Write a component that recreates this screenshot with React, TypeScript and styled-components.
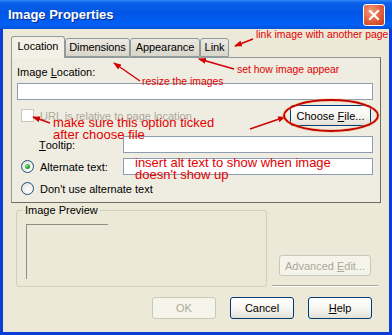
import styled, { createGlobalStyle } from 'styled-components';

const GlobalStyle = createGlobalStyle`
  html, body { margin: 0; padding: 0; background: #ffffff; }
  body { font-family: "Liberation Sans", Arial, sans-serif; }
  * { box-sizing: border-box; }
`;

const Window = styled.div`
  position: relative;
  width: 392px;
  height: 335px;
  display: flex;
  flex-direction: column;
  overflow: hidden;
  font-size: 11px;
  color: #000;
`;

const TitleBar = styled.div`
  height: 29px;
  flex: none;
  display: flex;
  align-items: center;
  justify-content: space-between;
  padding: 0 8px 0 8px;
  background: linear-gradient(
    to bottom,
    #2f86f6 0%,
    #0a5fe6 10%,
    #0055e5 45%,
    #0060f5 85%,
    #0052d8 100%
  );
`;

const Title = styled.span`
  color: #ffffff;
  font-weight: bold;
  font-size: 13px;
  text-shadow: 1px 1px 0 #0a2f8f;
`;

const CloseButton = styled.div`
  width: 22px;
  height: 22px;
  margin-right: -1px;
  margin-top: 1px;
  border: 1px solid #ffffff;
  border-radius: 3px;
  background: radial-gradient(circle at 35% 30%, #f29a7c 0%, #e2623f 50%, #c23c1a 100%);
  display: flex;
  align-items: center;
  justify-content: center;
`;

const Frame = styled.div`
  flex: 1;
  display: flex;
  flex-direction: column;
  background: #ece9d8;
  border: 3px solid #0b3ed6;
  border-top: none;
  padding: 7px 8px 0 8px;
`;

const TabStrip = styled.div`
  display: flex;
  align-items: flex-end;
  height: 21px;
  position: relative;
  z-index: 1;
`;

const Tab = styled.div<{ $active?: boolean; $w: number }>`
  width: ${(p) => p.$w}px;
  height: ${(p) => (p.$active ? '22px' : '19px')};
  margin-bottom: ${(p) => (p.$active ? '-1px' : '0')};
  padding-top: ${(p) => (p.$active ? '3px' : '2px')};
  border: 1px solid #919b9c;
  border-bottom: ${(p) => (p.$active ? 'none' : '1px solid #919b9c')};
  border-radius: 3px 3px 0 0;
  background: ${(p) =>
    p.$active ? '#f3f1e7' : 'linear-gradient(to bottom, #ebe9e1, #d8d5ca)'};
  font-size: 11px;
  line-height: 13px;
  text-align: center;
  white-space: nowrap;
  letter-spacing: -0.1px;
`;

const Panel = styled.div`
  height: 146px;
  flex: none;
  border: 1px solid #919b9c;
  border-right-color: #6f6d64;
  border-bottom-color: #6f6d64;
  background: #efede2;
  padding: 8px 7px 0 5px;
  display: flex;
  flex-direction: column;
`;

const Label = styled.div`
  line-height: 13px;
  height: 13px;
  white-space: nowrap;
`;

const TextInput = styled.div`
  height: 17px;
  border: 1px solid #8e9daf;
  background: #ffffff;
`;

const LocationInput = styled(TextInput)`
  margin-top: 4px;
`;

const CheckRow = styled.div`
  display: flex;
  align-items: center;
  height: 21px;
  margin-top: 5px;
`;

const CheckBox = styled.span`
  width: 13px;
  height: 13px;
  margin-left: 4px;
  border: 1px solid #cac8bb;
  background: #ffffff;
  flex: none;
`;

const DisabledText = styled.span`
  margin-left: 6px;
  color: #aca899;
  white-space: nowrap;
`;

const Button = styled.div<{ $disabled?: boolean; $width?: number }>`
  width: ${(p) => p.$width ?? 64}px;
  height: 22px;
  flex: none;
  display: flex;
  align-items: center;
  justify-content: center;
  border: 1px solid ${(p) => (p.$disabled ? '#c9c7ba' : '#003c74')};
  border-radius: 3px;
  color: ${(p) => (p.$disabled ? '#aca899' : '#000000')};
  background: ${(p) =>
    p.$disabled
      ? '#f5f4ea'
      : 'linear-gradient(to bottom, #ffffff 0%, #f6f5f0 55%, #e3e0d6 100%)'};
  white-space: nowrap;
  font-size: 11px;
`;

const ChooseButton = styled(Button)`
  height: 21px;
  margin-left: auto;
  margin-right: 2px;
`;

const FieldRow = styled.div<{ $gap: number }>`
  display: grid;
  grid-template-columns: 106px 1fr;
  align-items: center;
  height: ${(p) => (p.$gap === 7 ? 13 : 17)}px;
  margin-top: ${(p) => p.$gap}px;
`;

const FieldLabel = styled.div<{ $indent?: boolean }>`
  display: flex;
  align-items: center;
  padding-left: ${(p) => (p.$indent ? '22px' : '4px')};
  white-space: nowrap;
`;

const Radio = styled.span<{ $checked?: boolean }>`
  position: relative;
  width: 13px;
  height: 13px;
  flex: none;
  margin-right: 6px;
  border: 1px solid #1c5180;
  border-radius: 50%;
  background: radial-gradient(circle at 60% 65%, #ffffff 0%, #ecebe6 60%, #d6d2c2 100%);
  &::after {
    content: '';
    display: ${(p) => (p.$checked ? 'block' : 'none')};
    position: absolute;
    left: 3px;
    top: 3px;
    width: 5px;
    height: 5px;
    border-radius: 50%;
    background: radial-gradient(circle at 35% 35%, #8ee08e 0%, #21a121 60%, #187a18 100%);
  }
`;

const Middle = styled.div`
  display: flex;
  height: 83px;
  margin-top: 1px;
`;

const Fieldset = styled.fieldset`
  margin: 0 0 0 5px;
  width: 251px;
  height: 83px;
  border: 1px solid #d0d0bf;
  border-radius: 3px;
  padding: 0 0 0 9px;
  min-inline-size: 0;
`;

const Legend = styled.legend`
  font-size: 11px;
  line-height: 13px;
  padding: 0 2px;
  margin-left: -3px;
`;

const PreviewBox = styled.div`
  width: 82px;
  height: 55px;
  margin-top: 7px;
  border-top: 1px solid #8d8d85;
  border-left: 1px solid #8d8d85;
`;

const RightColumn = styled.div`
  margin-left: 5px;
  width: 106px;
  display: flex;
  flex-direction: column;
  justify-content: flex-end;
  align-items: center;
`;

const AdvancedButton = styled(Button)`
  height: 21px;
  margin-bottom: 9px;
`;

const Groove = styled.div`
  align-self: stretch;
  border-top: 1px solid #aca899;
  border-bottom: 1px solid #ffffff;
`;

const Footer = styled.div`
  display: flex;
  justify-content: flex-end;
  gap: 14px;
  margin-top: 10px;
  padding-right: 9px;
`;

const Overlay = styled.svg`
  position: absolute;
  left: 0;
  top: 0;
  pointer-events: none;
`;

const Note = styled.span<{ $x: number; $y: number; $big?: boolean }>`
  position: absolute;
  left: ${(p) => p.$x}px;
  top: ${(p) => p.$y}px;
  color: #e20000;
  font-family: "Liberation Sans", Arial, sans-serif;
  font-size: ${(p) => (p.$big ? '13px' : '10.4px')};
  line-height: 12px;
  white-space: nowrap;
  pointer-events: none;
`;

export default function App() {
  return (
    <>
      <GlobalStyle />
      <Window>
        <TitleBar>
          <Title>Image Properties</Title>
          <CloseButton>
            <svg width="12" height="12" viewBox="0 0 12 12">
              <path d="M2 2 L10 10 M10 2 L2 10" stroke="#ffffff" strokeWidth="2.2" strokeLinecap="square" />
            </svg>
          </CloseButton>
        </TitleBar>
        <Frame>
          <TabStrip>
            <Tab $active $w={54}>Location</Tab>
            <Tab $w={65}>Dimensions</Tab>
            <Tab $w={70}>Appearance</Tab>
            <Tab $w={29}>Link</Tab>
          </TabStrip>
          <Panel>
            <Label>
              Image <u>L</u>ocation:
            </Label>
            <LocationInput />
            <CheckRow>
              <CheckBox />
              <DisabledText>URL is relative to page location</DisabledText>
              <ChooseButton $width={81}>
                Choose&nbsp;<u>F</u>ile...
              </ChooseButton>
            </CheckRow>
            <FieldRow $gap={10}>
              <FieldLabel $indent>
                <u>T</u>ooltip:
              </FieldLabel>
              <TextInput />
            </FieldRow>
            <FieldRow $gap={5}>
              <FieldLabel>
                <Radio $checked />
                Alternate text:
              </FieldLabel>
              <TextInput />
            </FieldRow>
            <FieldRow $gap={7}>
              <FieldLabel>
                <Radio />
                Don't use alternate text
              </FieldLabel>
            </FieldRow>
          </Panel>
          <Middle>
            <Fieldset>
              <Legend>Image Preview</Legend>
              <PreviewBox />
            </Fieldset>
            <RightColumn>
              <AdvancedButton $disabled $width={92}>
                Advanced&nbsp;<u>E</u>dit...
              </AdvancedButton>
              <Groove />
            </RightColumn>
          </Middle>
          <Footer>
            <Button $disabled>OK</Button>
            <Button>Cancel</Button>
            <Button>
              <u>H</u>elp
            </Button>
          </Footer>
        </Frame>

        <Overlay width="392" height="335" viewBox="0 0 392 335">
          <defs>
            <marker id="head" markerWidth="8" markerHeight="6" refX="7" refY="3" orient="auto" markerUnits="userSpaceOnUse">
              <path d="M0 0 L8 3 L0 6 Z" fill="#d20000" />
            </marker>
          </defs>
          <g stroke="#d20000" strokeWidth="1.4" fill="none">
            <line x1="253" y1="39" x2="235" y2="46" markerEnd="url(#head)" />
            <line x1="234" y1="69" x2="199" y2="59" markerEnd="url(#head)" />
            <line x1="140" y1="81" x2="114" y2="63" markerEnd="url(#head)" />
            <line x1="50" y1="123" x2="33" y2="117" markerEnd="url(#head)" />
            <line x1="250" y1="129" x2="285" y2="117" markerEnd="url(#head)" />
          </g>
          <ellipse cx="331" cy="115.5" rx="47" ry="15.5" stroke="#f2b36a" strokeWidth="3.5" fill="none" opacity="0.5" />
          <ellipse cx="331" cy="115.5" rx="47" ry="15.5" stroke="#c40000" strokeWidth="1.8" fill="none" />
        </Overlay>

        <Note $x={256} $y={29}>link image with another page</Note>
        <Note $x={237} $y={64}>set how image appear</Note>
        <Note $x={142} $y={76}>resize the images</Note>
        <Note $x={53} $y={117} $big>make sure this option ticked</Note>
        <Note $x={53} $y={129} $big>after choose file</Note>
        <Note $x={135} $y={157} $big>insert alt text to show when image</Note>
        <Note $x={135} $y={169} $big>doesn't show up</Note>
      </Window>
    </>
  );
}
